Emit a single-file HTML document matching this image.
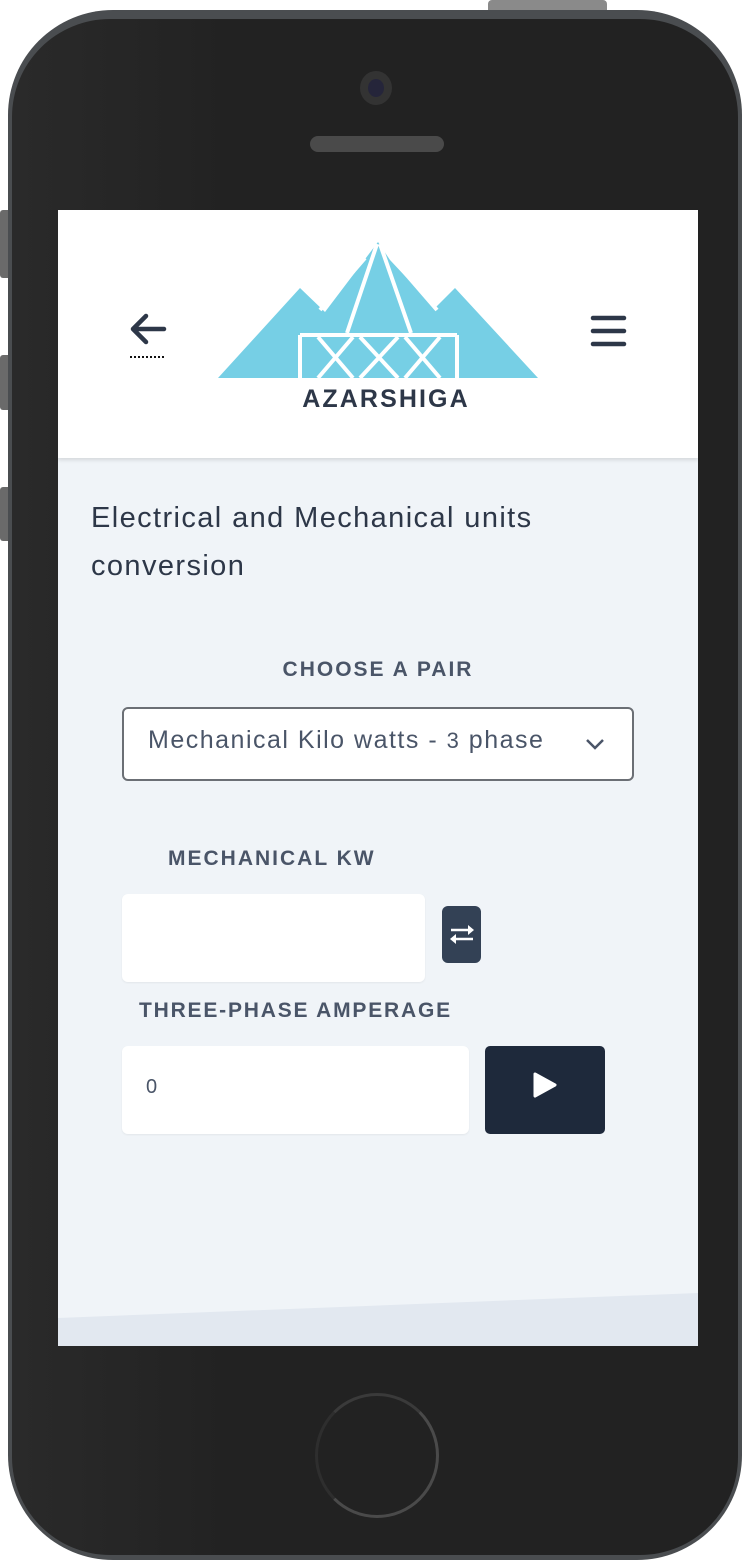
<!DOCTYPE html>
<html><head><meta charset="utf-8"><style>
*{margin:0;padding:0;box-sizing:border-box}
body{width:748px;height:1568px;background:#fff;position:relative;overflow:hidden;font-family:"Liberation Sans",sans-serif}
.abs{position:absolute}
.phone{left:8px;top:10px;width:734px;height:1550px;border-radius:105px;background:#4a4d50}
.phone2{left:12px;top:19px;width:726px;height:1536px;border-radius:98px;background:linear-gradient(90deg,#2a2a2a,#222 30%,#222)}
.screen{left:58px;top:210px;width:640px;height:1136px;background:#f0f4f8;overflow:hidden}
.header{left:0;top:0;width:640px;height:248px;background:#fff;box-shadow:0 2px 4px rgba(0,0,0,.12)}
.title{left:33px;top:284px;font-size:29px;line-height:48px;color:#2d3748;letter-spacing:1.4px}
.lbl{font-weight:bold;font-size:21px;color:#4a5568;letter-spacing:2px}
</style></head><body>
<div class="abs" style="left:488px;top:0;width:119px;height:12px;background:#8a8a8a;border-radius:4px 4px 0 0"></div>
<div class="abs" style="left:0;top:210px;width:9px;height:68px;background:#6a6a6a;border-radius:3px 0 0 3px"></div>
<div class="abs" style="left:0;top:355px;width:9px;height:55px;background:#6a6a6a;border-radius:3px 0 0 3px"></div>
<div class="abs" style="left:0;top:487px;width:9px;height:54px;background:#6a6a6a;border-radius:3px 0 0 3px"></div>
<div class="abs phone"></div>
<div class="abs phone2"></div>
<div class="abs" style="left:360px;top:71px;width:32px;height:34px;border-radius:50%;background:#333"></div>
<div class="abs" style="left:368px;top:79px;width:16px;height:18px;border-radius:50%;background:#25253a"></div>
<div class="abs" style="left:310px;top:136px;width:134px;height:16px;border-radius:8px;background:#4a4a4a"></div>
<div class="abs" style="left:315px;top:1393px;width:124px;height:125px;border-radius:50%;border:3px solid #4a4a4a;border-left-color:#2e2e2e;border-top-color:#3a3a3a"></div>

<div class="abs screen">
  <svg class="abs" style="left:0;top:1060px" width="640" height="76"><polygon points="0,48 640,23 640,76 0,76" fill="#e2e8f0"/></svg>
  <div class="abs header">
    <svg class="abs" style="left:70px;top:100px" width="40" height="50" viewBox="0 0 40 50"><path d="M36 19H5M18 6L5 19L18 32" fill="none" stroke="#2d3748" stroke-width="4.5" stroke-linecap="round" stroke-linejoin="round"/><line x1="2" y1="47" x2="38" y2="47" stroke="#111" stroke-width="2" stroke-dasharray="2 2"/></svg>
    <svg class="abs" style="left:532px;top:104px" width="38" height="34"><g stroke="#2d3748" stroke-width="4.5" stroke-linecap="round"><line x1="3" y1="4" x2="34" y2="4"/><line x1="3" y1="17" x2="34" y2="17"/><line x1="3" y1="30" x2="34" y2="30"/></g></svg>
    <svg class="abs" style="left:142px;top:20px" width="360" height="160" viewBox="0 0 360 160">
      <polygon points="18,148 100,58 125,82 178,12 190,30 235,78 255,58 338,148" fill="#76cfe5"/>
      <g stroke="#fff" stroke-width="4" fill="none">
        <line x1="165" y1="28" x2="120" y2="80"/><line x1="192" y1="28" x2="237" y2="80"/>
        <line x1="177" y1="14" x2="147" y2="103"/><line x1="180" y1="14" x2="211" y2="103"/>
        <line x1="100" y1="105" x2="257" y2="105"/>
        <line x1="100" y1="105" x2="100" y2="150"/><line x1="257" y1="105" x2="257" y2="150"/>
        <line x1="118" y1="107" x2="153" y2="148"/><line x1="153" y1="107" x2="118" y2="148"/>
        <line x1="160" y1="107" x2="198" y2="148"/><line x1="198" y1="107" x2="160" y2="148"/>
        <line x1="205" y1="107" x2="240" y2="148"/><line x1="240" y1="107" x2="205" y2="148"/>
      </g>
      <rect x="0" y="149" width="360" height="11" fill="#fff"/>
    </svg>
    <div class="abs" style="left:0;width:656px;text-align:center;top:175px;font-weight:bold;font-size:25px;color:#2d3748;letter-spacing:2.1px">AZARSHIGA</div>
  </div>
  <div class="abs title">Electrical and Mechanical units<br>conversion</div>
  <div class="abs lbl" style="left:0;width:640px;text-align:center;top:448px">CHOOSE A PAIR</div>
  <div class="abs" style="left:64px;top:497px;width:512px;height:74px;background:#fff;border:2px solid #6b6f75;border-radius:6px"></div>
  <div class="abs" style="left:90px;top:516px;font-size:25px;color:#4a5568;letter-spacing:1.5px">Mechanical Kilo watts - <span style="font-size:22px">3</span> phase</div>
  <svg class="abs" style="left:527px;top:527px" width="20" height="14"><path d="M2 3L10 11L18 3" fill="none" stroke="#4a5568" stroke-width="2.5"/></svg>
  <div class="abs lbl" style="left:110px;top:637px">MECHANICAL KW</div>
  <div class="abs" style="left:64px;top:684px;width:303px;height:88px;background:#fff;border-radius:6px;box-shadow:0 1px 2px rgba(0,0,0,.06)"></div>
  <div class="abs" style="left:384px;top:696px;width:39px;height:57px;background:#334155;border-radius:6px"></div>
  <svg class="abs" style="left:390px;top:714px" width="28" height="22"><g stroke="#fff" stroke-width="2.5" fill="#fff"><line x1="3" y1="6" x2="22" y2="6"/><line x1="6" y1="15" x2="25" y2="15"/></g><polygon points="20,1 26,6 20,11" fill="#fff"/><polygon points="8,10 2,15 8,20" fill="#fff"/></svg>
  <div class="abs lbl" style="left:81px;top:789px;letter-spacing:1.8px">THREE-PHASE AMPERAGE</div>
  <div class="abs" style="left:64px;top:836px;width:347px;height:88px;background:#fff;border-radius:6px;box-shadow:0 1px 2px rgba(0,0,0,.06)"></div>
  <div class="abs" style="left:88px;top:866px;font-size:20px;color:#4a5568">0</div>
  <div class="abs" style="left:427px;top:836px;width:120px;height:88px;background:#1e293b;border-radius:5px"></div>
  <svg class="abs" style="left:474px;top:861px" width="26" height="28"><path d="M3 3L23 14L3 25Z" fill="#fff" stroke="#fff" stroke-width="3" stroke-linejoin="round"/></svg>
</div>
</body></html>
